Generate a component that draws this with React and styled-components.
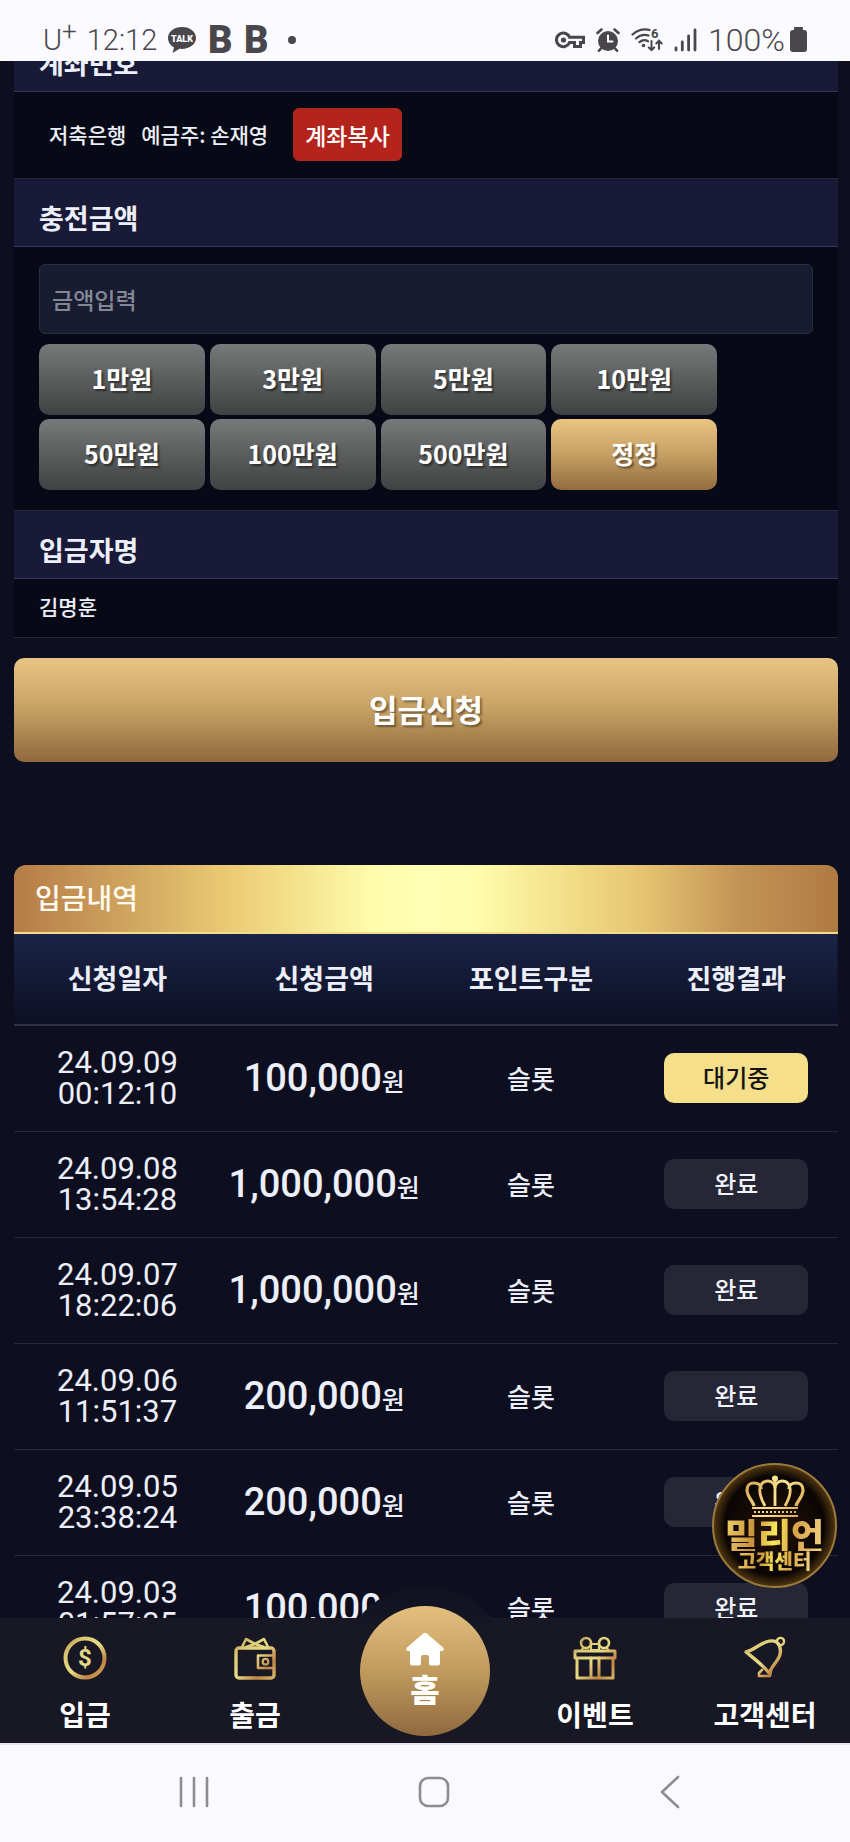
import React, { useState } from "react";
import styled, { createGlobalStyle } from "styled-components";

const KR = `"Noto Sans CJK KR", sans-serif`;
const NUM = `Roboto, "Noto Sans CJK KR", sans-serif`;

const GlobalStyle = createGlobalStyle`
    * {
        box-sizing: border-box;
    }
    body {
        margin: 0;
        background: #0d0f20;
        font-family: ${KR};
        font-weight: 500;
        color: #eceef8;
    }
    button, input {
        font-family: inherit;
        font-weight: inherit;
    }
`
const Screen = styled.div`
    height: 100vh;
    display: flex;
    flex-direction: column;
    position: relative;
    overflow: hidden;
`

/* ---- phone status bar ---- */
const StatusBar = styled.header`
    flex: none;
    height: 61px;
    padding: 18px 43px 0;
    background: #fbfaff;
    color: #49474b;
    font: 400 30px/44px ${NUM};
    display: flex;
    justify-content: space-between;
    z-index: 2;
`
const StatusGroup = styled.div`
    display: flex;
    align-items: center;
    gap: ${props => props.$gap}px;
`
const Clock = styled.span`
    font-size: 29px;
    font-weight: 300;
`
const Battery = styled.span`
    margin-right: -6px;
    font-size: 32px;
    font-weight: 300;
`
const Carrier = styled.span`
    display: flex;
    align-items: flex-start;
    font-size: 29px;
    font-weight: 300;
    line-height: 44px;
`
const CarrierPlus = styled.sup`
    font-size: 26px;
    line-height: 26px;
`
const AppLetter = styled.span`
    width: 26px;
    font-size: 38px;
    font-weight: 900;
    text-align: center;
`
const Dot = styled.span`
    width: 8px;
    height: 8px;
    margin-left: 9px;
    border-radius: 50%;
    background: #49474b;
`

/* ---- deposit form ---- */
const Content = styled.main`
    flex: 1;
    min-height: 0;
    padding: 0 12px 0 14px;
    overflow: hidden;
`
const Form = styled.form`
    margin-top: -38px;
`
const Band = styled.h2`
    margin: 0;
    height: 69px;
    padding: 11px 25px 0;
    background: #181a38;
    border-top: 1px solid #24263a;
    border-bottom: 1px solid #34365a;
    font-size: 27px;
    line-height: 56px;
    font-weight: 700;
`
const Body = styled.div`
    padding: 17px 25px 20px;
    background: #070a16;
`
const Account = styled(Body)`
    display: flex;
    align-items: center;
    padding: 16px 25px 17px 35px;
    font-size: 21px;
    line-height: 53px;
`
const Holder = styled.span`
    margin: 0 25px 0 15px;
`
const CopyButton = styled.button`
    height: 53px;
    padding: 0 11px;
    border: 1px solid #a82a22;
    border-radius: 6px;
    background: #b5241b;
    color: #fff;
    font-size: 23px;
`
const AmountInput = styled.input`
    display: block;
    width: 100%;
    height: 70px;
    padding: 0 12px;
    border: 1px solid #2a2d42;
    border-radius: 6px;
    background: #181c30;
    color: #eceef8;
    font-size: 23px;

    &::placeholder {
        color: #858796;
        opacity: 1;
    }
`
const AmountGrid = styled.div`
    width: 88%;
    margin-top: 10px;
    padding-right: 3px;
    display: grid;
    grid-template-columns: repeat(4, 1fr);
    gap: 4px 5px;
`
const AmountButton = styled.button`
    height: 71px;
    padding: 0 0 4px;
    border: none;
    border-radius: 10px;
    background: ${props => props.$gold
        ? "linear-gradient(#eac482, #c5a063 50%, #936b41)"
        : "linear-gradient(#777a7a, #5b5d5d 50%, #3f4142)"};
    color: #fff;
    font-size: 25px;
    font-weight: 700;
    text-shadow: 2px 2px 2px rgba(0, 0, 0, 0.45);
`
const Name = styled(Body)`
    padding: 13px 25px 16px;
    border-bottom: 1px solid #24263a;
    font-size: 21px;
    line-height: 29px;
`
const Submit = styled.button`
    display: block;
    width: 100%;
    height: 104px;
    margin-top: 20px;
    padding: 0 0 4px;
    border: none;
    border-radius: 10px;
    background: linear-gradient(#eac482, #c5a063 50%, #8f683d);
    color: #fff;
    font-size: 31px;
    font-weight: 700;
    text-shadow: 2px 2px 2px rgba(0, 0, 0, 0.4);
`

/* ---- history ---- */
const History = styled.section`
    margin-top: 103px;
`
const HistoryTitle = styled.h2`
    margin: 0;
    height: 69px;
    padding: 0 21px;
    border-radius: 12px 12px 0 0;
    border-bottom: 2px solid #f0dc8c;
    background: linear-gradient(90deg, #b57c46, #d0a55f 14%, #ebca74 26%, #f5e48f 35%, #fffdac 44%, #ffffb4 50%, #fffdac 56%, #f5e48f 65%, #e6c572 76%, #c39355 88%, #af7a41);
    color: #fffbf0;
    font-size: 28px;
    font-weight: 500;
    line-height: 64px;
`
const Table = styled.table`
    width: 100%;
    table-layout: fixed;
    border-collapse: separate;
    border-spacing: 0;
    text-align: center;
`
const HeadRow = styled.tr`
    height: 92px;
    background: linear-gradient(#1a2446, #0d0f23);
`
const Th = styled.th`
    width: ${props => props.$last ? "auto" : "25.1%"};
    padding: 0 0 4px;
    border-bottom: 2px solid #2e3148;
    font-size: 27px;
    font-weight: 700;
`
const Td = styled.td`
    height: 106px;
    padding: 0 0 2px;
    border-bottom: 1px solid #26283a;
    font-size: 26px;
    white-space: nowrap;
`
const When = styled.time`
    display: block;
    font: 400 31px/31px ${NUM};
`
const Amount = styled.span`
    display: block;
    padding-top: 2px;
    font: 500 38px/46px ${NUM};
`
const Won = styled.span`
    font-family: ${KR};
    font-size: 25px;
`
const Status = styled.span`
    display: block;
    width: 71%;
    margin: 0 auto;
    padding-bottom: 2px;
    border-radius: 10px;
    background: ${props => props.$waiting ? "#f5df8a" : "#252736"};
    color: ${props => props.$waiting ? "#141414" : "#f2f3fa"};
    font-size: 24px;
    line-height: 48px;
`

/* ---- floating support badge ---- */
const Badge = styled.a`
    position: absolute;
    right: 13px;
    bottom: 254px;
    z-index: 3;
    width: 125px;
    height: 125px;
    padding-top: 10px;
    border: 2px solid #9a7b3a;
    border-radius: 50%;
    background: radial-gradient(circle, #2a1405 0%, #140a04 35%, #0a0604 58%, #4a3110 70%);
    display: flex;
    flex-direction: column;
    align-items: center;
    text-decoration: none;
`
const BadgeText = styled.span`
    background: linear-gradient(100deg, #f2cf6b, #c8913c 30%, #f8e85a 50%, #d9a347 70%, #f3d68a);
    background-clip: text;
    color: transparent;
    font-size: ${props => props.$size}px;
    line-height: ${props => props.$line}px;
    font-weight: 900;
`

/* ---- bottom menu ---- */
const Menu = styled.nav`
    flex: none;
    position: relative;
    z-index: 1;
    height: 125px;
    background: #171824;
    display: grid;
    grid-template-columns: repeat(5, 1fr);
`
const MenuItem = styled.a`
    padding-top: 18px;
    display: flex;
    flex-direction: column;
    align-items: center;
    gap: 12px;
    color: #fff;
    font-size: 28px;
    line-height: 44px;
    font-weight: 700;
    text-decoration: none;
    white-space: nowrap;
`
const HomeSlot = styled.div`
    position: relative;
`
const Halo = styled.div`
    position: absolute;
    left: 50%;
    bottom: -13px;
    width: 170px;
    height: 170px;
    margin-left: -85px;
    border-radius: 50%;
    background: linear-gradient(#10111f, #171824 28%);
    clip-path: inset(0 0 13px 0);
`
const Home = styled.a`
    position: absolute;
    left: 50%;
    bottom: 7px;
    width: 130px;
    height: 130px;
    margin-left: -65px;
    padding-top: 26px;
    border-radius: 50%;
    background: linear-gradient(#e5bf7e, #c09b5d 50%, #8f693f);
    display: flex;
    flex-direction: column;
    align-items: center;
    color: #fff;
    font-size: 32px;
    line-height: 44px;
    font-weight: 900;
    text-decoration: none;
`
const SystemBar = styled.footer`
    flex: none;
    height: 99px;
    padding: 0 20% 4px 21%;
    border-top: 2px solid #e6e4ec;
    background: #faf9fe;
    display: flex;
    align-items: center;
    justify-content: space-between;
`
const SystemButton = styled.button`
    padding: 0;
    border: none;
    background: none;
    display: flex;
`

const TalkIcon = () => (
    <svg width="30" height="28" viewBox="0 0 30 28">
        <path d="M15 1C7 1 1 5.800 1 12c0 4 2.400 7.400 6 9.400L5.500 27l7-4.200c9 1 16.500-4 16.500-10.800C29 5.800 23 1 15 1z" fill="#49474b" />
        <text x="15" y="16" textAnchor="middle" fontFamily="Roboto, sans-serif" fontSize="9" fontWeight="900" fill="#fff">TALK</text>
    </svg>
)
const KeyIcon = () => (
    <svg width="30" height="18" viewBox="0 0 30 18" fill="none" stroke="#49474b" strokeWidth="3">
        <path d="M14.500 6.200H28.500V11.500H25.500V15.500H19.500V11.500H14.500A6.800 6.800 0 1 1 14.500 6.200z" />
        <circle cx="8.500" cy="9" r="2.600" fill="#49474b" stroke="none" />
    </svg>
)
const AlarmIcon = () => (
    <svg width="24" height="24" viewBox="0 0 24 24" fill="none" stroke="#49474b" strokeWidth="2.600" strokeLinecap="round">
        <circle cx="12" cy="13" r="10" fill="#49474b" stroke="none" />
        <path d="M1.500 5L5.500 1.500M22.500 5L18.500 1.500M5 20.500L3 22.700M19 20.500L21 22.700" />
        <path d="M12 7.500V13.500H16.500" stroke="#fff" strokeWidth="2" />
    </svg>
)
const WifiIcon = () => (
    <svg width="32" height="25" viewBox="0 0 32 25" fill="none" stroke="#49474b" strokeWidth="2.200" strokeLinecap="round">
        <path d="M1.500 7.500C6 3 13 1.200 18.500 3M5 11.500C8.500 8.300 13 7.200 17.500 8.500M8.500 15.200C11 13 14.500 12.700 17 14.300" />
        <circle cx="12.500" cy="18.500" r="1.800" fill="#49474b" stroke="none" />
        <path d="M20.500 14V23M17.800 20.500L20.500 23.200L23.200 20.500M28 22V14M25.300 16.500L28 13.600L30.700 16.500" strokeWidth="2" />
        <text x="20" y="11" fontFamily="Roboto, sans-serif" fontSize="13" fontWeight="700" fill="#49474b" stroke="none">6</text>
    </svg>
)
const SignalIcon = () => (
    <svg width="23" height="24" viewBox="0 0 23 24" stroke="#49474b" strokeWidth="2.800" strokeLinecap="round">
        <path d="M2 20V22M8.300 14V22M14.600 8V22M21 2V22" />
    </svg>
)
const BatteryIcon = () => (
    <svg width="17" height="25" viewBox="0 0 17 25" fill="#49474b">
        <rect x="4" y="0" width="9" height="5" rx="1" />
        <rect x="0" y="3" width="17" height="22" rx="3" />
    </svg>
)

const GoldDefs = () => (
    <svg width="0" height="0" style={{ position: "absolute" }} aria-hidden="true">
        <defs>
            <linearGradient id="gold" x1="0" y1="0" x2="44" y2="44" gradientUnits="userSpaceOnUse">
                <stop offset="0" stopColor="#b07a3c" />
                <stop offset="0.250" stopColor="#dcc873" />
                <stop offset="0.500" stopColor="#e8dc86" />
                <stop offset="0.750" stopColor="#c08446" />
                <stop offset="1" stopColor="#dcc46c" />
            </linearGradient>
            <linearGradient id="crown" x1="0" y1="0" x2="60" y2="42" gradientUnits="userSpaceOnUse">
                <stop offset="0" stopColor="#d59a45" />
                <stop offset="0.500" stopColor="#fbe592" />
                <stop offset="1" stopColor="#d29a42" />
            </linearGradient>
        </defs>
    </svg>
)
const MenuIcon = ({ children }) => (
    <svg width="44" height="44" viewBox="0 0 44 44" fill="none" stroke="url(#gold)" strokeWidth="3.400" strokeLinejoin="round" strokeLinecap="round">
        {children}
    </svg>
)
const CoinIcon = () => (
    <MenuIcon>
        <circle cx="22" cy="22" r="19.500" strokeWidth="4" />
        <text x="22" y="30" textAnchor="middle" fontFamily="Roboto, sans-serif" fontSize="24" fill="#e4d884" stroke="none">$</text>
    </MenuIcon>
)
const WalletIcon = () => (
    <MenuIcon>
        <rect x="3" y="12" width="38" height="30" rx="3" />
        <path d="M9 11L13 3L22 8L31 3L35 11M13 11L22 8L31 11" strokeWidth="2.600" />
        <path d="M41 19.500H25V32H41" strokeWidth="2.600" />
        <circle cx="32.500" cy="25.700" r="2.800" strokeWidth="2.200" />
    </MenuIcon>
)
const GiftIcon = () => (
    <MenuIcon>
        <rect x="2" y="15" width="40" height="7" strokeWidth="3" />
        <path d="M4 22V42H40V22M18 22V42M26 22V42" strokeWidth="3" />
        <circle cx="13" cy="7" r="5" strokeWidth="2.600" />
        <circle cx="31" cy="7" r="5" strokeWidth="2.600" />
        <path d="M18 8H26V14H18zM10 12L8 15M34 12L36 15" strokeWidth="2.200" />
    </MenuIcon>
)
const BellIcon = () => (
    <MenuIcon>
        <path d="M3 16C11 14 15 9 23 6C29 4 34 5 36 9C39 15 37 21 33 26C29 31 28 33 26 37C21 30 9 21 3 16z" />
        <circle cx="37.500" cy="5.500" r="3.600" strokeWidth="2.400" />
        <path d="M19 34L16 37V40H27L28 35" strokeWidth="2.600" />
    </MenuIcon>
)
const CrownIcon = () => (
    <svg width="60" height="42" viewBox="0 0 60 42" fill="none" stroke="url(#crown)" strokeWidth="3.200">
        <path d="M9 31C8 26 2 22 2 15C2 10 5 8 9 8C13 8 16 10 16 14M51 31C52 26 58 22 58 15C58 10 55 8 51 8C47 8 44 10 44 14" />
        <path d="M20 31C16 24 14 18 15 13C16 8 19 6 23 6C27 6 30 9 30 14C30 9 33 6 37 6C41 6 44 8 45 13C46 18 44 24 40 31M30 5V31" strokeWidth="2.800" />
        <circle cx="30" cy="3.500" r="3" fill="#fbe592" stroke="none" />
        <path d="M7 33H53M7 41H53" strokeWidth="2" />
        <path d="M9 37H51" strokeWidth="2" strokeDasharray="2 2" />
    </svg>
)
const HouseIcon = () => (
    <svg width="38" height="34" viewBox="0 0 38 34" fill="#fff">
        <path d="M17.500 1.200a2.500 2.500 0 0 1 3 0L37 15.500c1.500 1.500.7 3.500-1.300 3.500H34V31a2.500 2.500 0 0 1-2.500 2.500H25a2 2 0 0 1-2-2V25a2 2 0 0 0-2-2h-4a2 2 0 0 0-2 2v6.500a2 2 0 0 1-2 2H6.500A2.500 2.500 0 0 1 4 31V19H2.300C.3 19-.5 17 1 15.500z" />
    </svg>
)

const amounts = [1, 3, 5, 10, 50, 100, 500]

const rows = [
    { date: "24.09.09", time: "00:12:10", amount: "100,000", waiting: true },
    { date: "24.09.08", time: "13:54:28", amount: "1,000,000" },
    { date: "24.09.07", time: "18:22:06", amount: "1,000,000" },
    { date: "24.09.06", time: "11:51:37", amount: "200,000" },
    { date: "24.09.05", time: "23:38:24", amount: "200,000" },
    { date: "24.09.03", time: "01:57:35", amount: "100,000" },
]

function DepositForm() {
    const [amount, setAmount] = useState("")
    const add = n => setAmount(String(Number(amount) + n * 10000))

    return (
        <Form onSubmit={e => e.preventDefault()}>
            <Band>계좌번호</Band>
            <Account>
                <span>저축은행</span>
                <Holder>예금주: 손재영</Holder>
                <CopyButton type="button">계좌복사</CopyButton>
            </Account>
            <Band><label htmlFor="amount">충전금액</label></Band>
            <Body>
                <AmountInput
                    id="amount"
                    inputMode="numeric"
                    placeholder="금액입력"
                    value={amount}
                    onChange={e => setAmount(e.target.value.replace(/\D/g, ""))}
                />
                <AmountGrid>
                    {amounts.map(n => (
                        <AmountButton type="button" key={n} onClick={() => add(n)}>{n}만원</AmountButton>
                    ))}
                    <AmountButton type="button" $gold onClick={() => setAmount("")}>정정</AmountButton>
                </AmountGrid>
            </Body>
            <Band>입금자명</Band>
            <Name>김명훈</Name>
            <Submit type="submit">입금신청</Submit>
        </Form>
    )
}

export default function App() {
    return (
        <Screen>
            <GlobalStyle />
            <GoldDefs />
            <StatusBar>
                <StatusGroup $gap={10}>
                    <Carrier>U<CarrierPlus>+</CarrierPlus></Carrier>
                    <Clock>12:12</Clock>
                    <TalkIcon />
                    <AppLetter>B</AppLetter>
                    <AppLetter>B</AppLetter>
                    <Dot />
                </StatusGroup>
                <StatusGroup $gap={11}>
                    <KeyIcon />
                    <AlarmIcon />
                    <WifiIcon />
                    <SignalIcon />
                    <Battery>100%</Battery>
                    <BatteryIcon />
                </StatusGroup>
            </StatusBar>

            <Content>
                <DepositForm />
                <History>
                    <HistoryTitle>입금내역</HistoryTitle>
                    <Table>
                        <thead>
                            <HeadRow>
                                <Th>신청일자</Th>
                                <Th>신청금액</Th>
                                <Th>포인트구분</Th>
                                <Th $last>진행결과</Th>
                            </HeadRow>
                        </thead>
                        <tbody>
                            {rows.map(row => (
                                <tr key={row.date}>
                                    <Td>
                                        <When>{row.date}<br />{row.time}</When>
                                    </Td>
                                    <Td><Amount>{row.amount}<Won>원</Won></Amount></Td>
                                    <Td>슬롯</Td>
                                    <Td>
                                        <Status $waiting={row.waiting}>{row.waiting ? "대기중" : "완료"}</Status>
                                    </Td>
                                </tr>
                            ))}
                        </tbody>
                    </Table>
                </History>
            </Content>

            <Badge href="#support">
                <CrownIcon />
                <BadgeText $size={36} $line={34}>밀리언</BadgeText>
                <BadgeText $size={20} $line={20}>고객센터</BadgeText>
            </Badge>

            <Menu>
                <MenuItem href="#deposit"><CoinIcon />입금</MenuItem>
                <MenuItem href="#withdraw"><WalletIcon />출금</MenuItem>
                <HomeSlot>
                    <Halo />
                    <Home href="#home"><HouseIcon />홈</Home>
                </HomeSlot>
                <MenuItem href="#event"><GiftIcon />이벤트</MenuItem>
                <MenuItem href="#support"><BellIcon />고객센터</MenuItem>
            </Menu>

            <SystemBar>
                <SystemButton aria-label="최근 앱">
                    <svg width="30" height="32" viewBox="0 0 30 32" stroke="#8e8c93" strokeWidth="2.600" strokeLinecap="round">
                        <path d="M2 2V30M15 2V30M28 2V30" />
                    </svg>
                </SystemButton>
                <SystemButton aria-label="홈 화면">
                    <svg width="32" height="32" viewBox="0 0 32 32" fill="none" stroke="#8e8c93" strokeWidth="2.600">
                        <rect x="2" y="2" width="28" height="28" rx="8" />
                    </svg>
                </SystemButton>
                <SystemButton aria-label="뒤로">
                    <svg width="20" height="34" viewBox="0 0 20 34" fill="none" stroke="#8e8c93" strokeWidth="2.600" strokeLinecap="round" strokeLinejoin="round">
                        <path d="M18 2L2 17L18 32" />
                    </svg>
                </SystemButton>
            </SystemBar>
        </Screen>
    )
}
